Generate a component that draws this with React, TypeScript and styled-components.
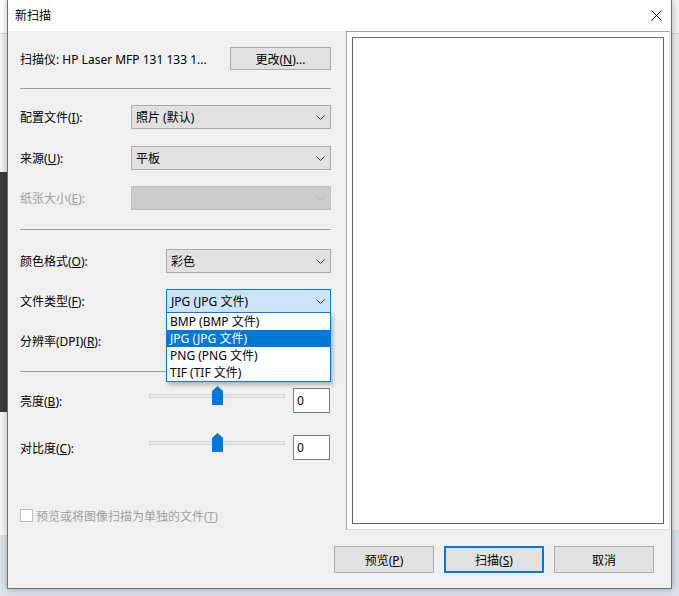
import styled, { createGlobalStyle } from "styled-components";

const GlobalStyle = createGlobalStyle`
  html, body {
    margin: 0;
    padding: 0;
  }
  body {
    background: #dde4ec;
    font-family: "Noto Sans", "Noto Sans CJK SC", sans-serif;
    font-size: 12px;
    color: #000;
  }
  * {
    box-sizing: border-box;
  }
`;

type ComboState = "normal" | "disabled" | "focused";

const fileTypes = ["BMP (BMP 文件)", "JPG (JPG 文件)", "PNG (PNG 文件)", "TIF (TIF 文件)"];

const Chevron = ({ color }: { color: string }) => (
  <svg width="9" height="5" viewBox="0 0 9 5" aria-hidden="true">
    <polyline points="0.5,0.5 4.5,4.5 8.5,0.5" fill="none" stroke={color} strokeWidth="1" />
  </svg>
);

function Combo({ value, state = "normal", children }: { value?: string; state?: ComboState; children?: React.ReactNode }) {
  return (
    <ComboBox $state={state}>
      <ComboText>{value}</ComboText>
      <Chevron color={state === "disabled" ? "#b4b4b4" : "#303030"} />
      {children}
    </ComboBox>
  );
}

function Slider() {
  return (
    <SliderBox>
      <Track />
      <Thumb>
        <svg width="11" height="19" viewBox="0 0 11 19" aria-hidden="true">
          <polygon points="0,5 5.5,0 11,5 11,19 0,19" fill="#0078d7" />
        </svg>
      </Thumb>
    </SliderBox>
  );
}

export default function App() {
  return (
    <Page>
      <GlobalStyle />
      <LeftStrip>
        <StripBlock $h={33} $bg="#ffffff" />
        <StripBlock $h={1} $bg="#d6d6d6" />
        <StripBlock $h={138} $bg="#f3f3f3" />
        <StripBlock $h={240} $bg="#3b3b3b" />
        <StripBlock $h={123} $bg="#f7f7f7" />
        <StripBlock $h={60} $bg="#dde4ec" />
      </LeftStrip>

      <Window>
        <TitleBar>
          <TitleText>新扫描</TitleText>
          <CloseIcon width="11" height="11" viewBox="0 0 11 11" aria-label="关闭">
            <line x1="0.5" y1="0.5" x2="10.5" y2="10.5" stroke="#000" strokeWidth="1" />
            <line x1="10.5" y1="0.5" x2="0.5" y2="10.5" stroke="#000" strokeWidth="1" />
          </CloseIcon>
        </TitleBar>

        <Main>
          <LeftPanel>
            <ScannerRow>
              <span>扫描仪: HP Laser MFP 131 133 1...</span>
              <Button $w={101} $h={23}>
                更改(<u>N</u>)...
              </Button>
            </ScannerRow>

            <Divider $mt={18} />

            <FieldRow $mt={16}>
              <Label $w={111}>
                配置文件(<u>I</u>):
              </Label>
              <Combo value="照片 (默认)" />
            </FieldRow>
            <FieldRow $mt={17}>
              <Label $w={111}>
                来源(<u>U</u>):
              </Label>
              <Combo value="平板" />
            </FieldRow>
            <FieldRow $mt={16}>
              <Label $w={111} $disabled>
                纸张大小(<u>E</u>):
              </Label>
              <Combo state="disabled" />
            </FieldRow>

            <Divider $mt={19} />

            <FieldRow $mt={19}>
              <Label $w={146}>
                颜色格式(<u>O</u>):
              </Label>
              <Combo value="彩色" />
            </FieldRow>
            <FieldRow $mt={16} $top>
              <Label $w={146}>
                文件类型(<u>F</u>):
              </Label>
              <Combo value="JPG (JPG 文件)" state="focused">
                <DropList>
                  {fileTypes.map(t => (
                    <DropItem key={t} $selected={t.startsWith("JPG")}>
                      {t}
                    </DropItem>
                  ))}
                </DropList>
              </Combo>
            </FieldRow>
            <FieldRow $mt={16}>
              <Label $w={146}>
                分辨率(DPI)(<u>R</u>):
              </Label>
              <Combo />
            </FieldRow>

            <Divider $mt={18} />

            <SliderRow $mt={16}>
              <Label>
                亮度(<u>B</u>):
              </Label>
              <Slider />
              <NumberBox>0</NumberBox>
            </SliderRow>
            <SliderRow $mt={22}>
              <Label>
                对比度(<u>C</u>):
              </Label>
              <Slider />
              <NumberBox>0</NumberBox>
            </SliderRow>

            <CheckRow>
              <CheckBox />
              <span>
                预览或将图像扫描为单独的文件(<u>T</u>)
              </span>
            </CheckRow>
          </LeftPanel>

          <PreviewFrame>
            <PreviewCanvas />
          </PreviewFrame>
        </Main>

        <Footer>
          <Button $w={100} $h={27}>
            预览(<u>P</u>)
          </Button>
          <Button $w={100} $h={27} $primary>
            扫描(<u>S</u>)
          </Button>
          <Button $w={100} $h={27}>
            取消
          </Button>
        </Footer>
      </Window>

      <RightStrip>
        <StripBlock $h={33} $bg="#f4f4f4" />
        <StripBlock $h={1} $bg="#d9d9d9" />
        <StripBlock $h={496} $bg="#ececec" />
      </RightStrip>
    </Page>
  );
}

// ---------- background ----------
const Page = styled.div`
  width: 679px;
  height: 596px;
  overflow: hidden;
  display: flex;
  align-items: flex-start;
  background: #dbe2ea;
`;

const LeftStrip = styled.div`
  width: 7px;
  flex: 0 0 7px;
  display: flex;
  flex-direction: column;
  overflow: hidden;
`;

const RightStrip = styled(LeftStrip)`
  flex: 1 1 auto;
`;

const StripBlock = styled.div<{ $h: number; $bg: string }>`
  height: ${({ $h }) => $h}px;
  flex: 0 0 auto;
  background: ${({ $bg }) => $bg};
`;

// ---------- window ----------
const Window = styled.div`
  width: 665px;
  height: 589px;
  flex: 0 0 665px;
  display: flex;
  flex-direction: column;
  background: #f0f0f0;
  border: 1px solid #707070;
  border-top: none;
  box-shadow: 0 0 7px rgba(0, 0, 0, 0.3);
  position: relative;
  z-index: 1;
`;

const TitleBar = styled.div`
  height: 31px;
  flex: 0 0 31px;
  display: flex;
  align-items: center;
  padding: 0 9px 1px 7px;
  background: #fff;
`;

const TitleText = styled.span`
  font-size: 12px;
`;

const CloseIcon = styled.svg`
  margin-left: auto;
  display: block;
`;

const Main = styled.div`
  height: 499px;
  flex: 0 0 499px;
  display: flex;
`;

const LeftPanel = styled.div`
  width: 338px;
  flex: 0 0 338px;
  padding: 16px 15px 0 12px;
  display: flex;
  flex-direction: column;
`;

const ScannerRow = styled.div`
  height: 23px;
  display: flex;
  align-items: center;
  justify-content: space-between;
`;

const Divider = styled.div<{ $mt: number }>`
  height: 1px;
  margin-top: ${({ $mt }) => $mt}px;
  background: #a0a0a0;
`;

const FieldRow = styled.div<{ $mt: number; $top?: boolean }>`
  height: 24px;
  margin-top: ${({ $mt }) => $mt}px;
  display: flex;
  align-items: center;
  position: relative;
  z-index: ${({ $top }) => ($top ? 5 : "auto")};
`;

const Label = styled.span<{ $w?: number; $disabled?: boolean }>`
  flex: 0 0 ${({ $w }) => ($w ? `${$w}px` : "auto")};
  white-space: nowrap;
  color: ${({ $disabled }) => ($disabled ? "#a0a0a0" : "#000")};
`;

const ComboBox = styled.div<{ $state: ComboState }>`
  flex: 1 1 auto;
  height: 24px;
  position: relative;
  display: flex;
  align-items: center;
  padding: 0 5px 0 4px;
  border: 1px solid ${({ $state }) => ($state === "focused" ? "#0078d7" : $state === "disabled" ? "#bfbfbf" : "#adadad")};
  background: ${({ $state }) => ($state === "focused" ? "#cce4f7" : $state === "disabled" ? "#cccccc" : "#e1e1e1")};
`;

const ComboText = styled.span`
  flex: 1 1 auto;
  white-space: nowrap;
`;

const DropList = styled.ul`
  position: absolute;
  top: 100%;
  left: -1px;
  right: -1px;
  margin: 0;
  padding: 0;
  list-style: none;
  background: #fff;
  border: 1px solid #0078d7;
  box-shadow: 2px 3px 4px rgba(0, 0, 0, 0.25);
`;

const DropItem = styled.li<{ $selected?: boolean }>`
  height: 17px;
  line-height: 17px;
  padding-left: 3px;
  white-space: nowrap;
  background: ${({ $selected }) => ($selected ? "#0078d7" : "#fff")};
  color: ${({ $selected }) => ($selected ? "#fff" : "#000")};
`;

const SliderRow = styled.div<{ $mt: number }>`
  height: 25px;
  margin-top: ${({ $mt }) => $mt}px;
  display: grid;
  grid-template-columns: 129px 136px 45px;
  align-items: center;
`;

const SliderBox = styled.div`
  position: relative;
  height: 25px;
  align-self: start;
`;

const Track = styled.div`
  margin-top: 6px;
  height: 4px;
  background: #e7eaea;
  border: 1px solid #d6d6d6;
`;

const Thumb = styled.div`
  position: absolute;
  top: -2px;
  left: 63px;
  width: 11px;
  height: 19px;
  svg {
    display: block;
  }
`;

const NumberBox = styled.div`
  width: 37px;
  height: 25px;
  margin-left: 8px;
  display: flex;
  align-items: center;
  padding-left: 3px;
  background: #fff;
  border: 1px solid #7a7a7a;
`;

const CheckRow = styled.div`
  margin-top: 49px;
  height: 13px;
  display: flex;
  align-items: center;
  gap: 3px;
  color: #a0a0a0;
  white-space: nowrap;
`;

const CheckBox = styled.span`
  width: 13px;
  height: 13px;
  flex: 0 0 13px;
  background: #fff;
  border: 1px solid #bcbcbc;
`;

const PreviewFrame = styled.div`
  width: 324px;
  flex: 0 0 324px;
  height: 499px;
  padding: 5px;
  background: #fff;
  border: 1px solid;
  border-color: #a0a0a0 #dcdcdc #dcdcdc #a0a0a0;
`;

const PreviewCanvas = styled.div`
  width: 100%;
  height: 100%;
  background: #fff;
  border: 1px solid #646464;
`;

// ---------- footer ----------
const Footer = styled.div`
  flex: 1 1 auto;
  display: flex;
  justify-content: flex-end;
  align-items: flex-start;
  gap: 10px;
  padding: 16px 17px 0 0;
`;

const Button = styled.button<{ $w: number; $h: number; $primary?: boolean }>`
  width: ${({ $w }) => $w}px;
  height: ${({ $h }) => $h}px;
  padding: 0;
  font-family: inherit;
  font-size: 12px;
  color: #000;
  background: #e1e1e1;
  border: ${({ $primary }) => ($primary ? "2px solid #0078d7" : "1px solid #adadad")};
  cursor: default;
`;
